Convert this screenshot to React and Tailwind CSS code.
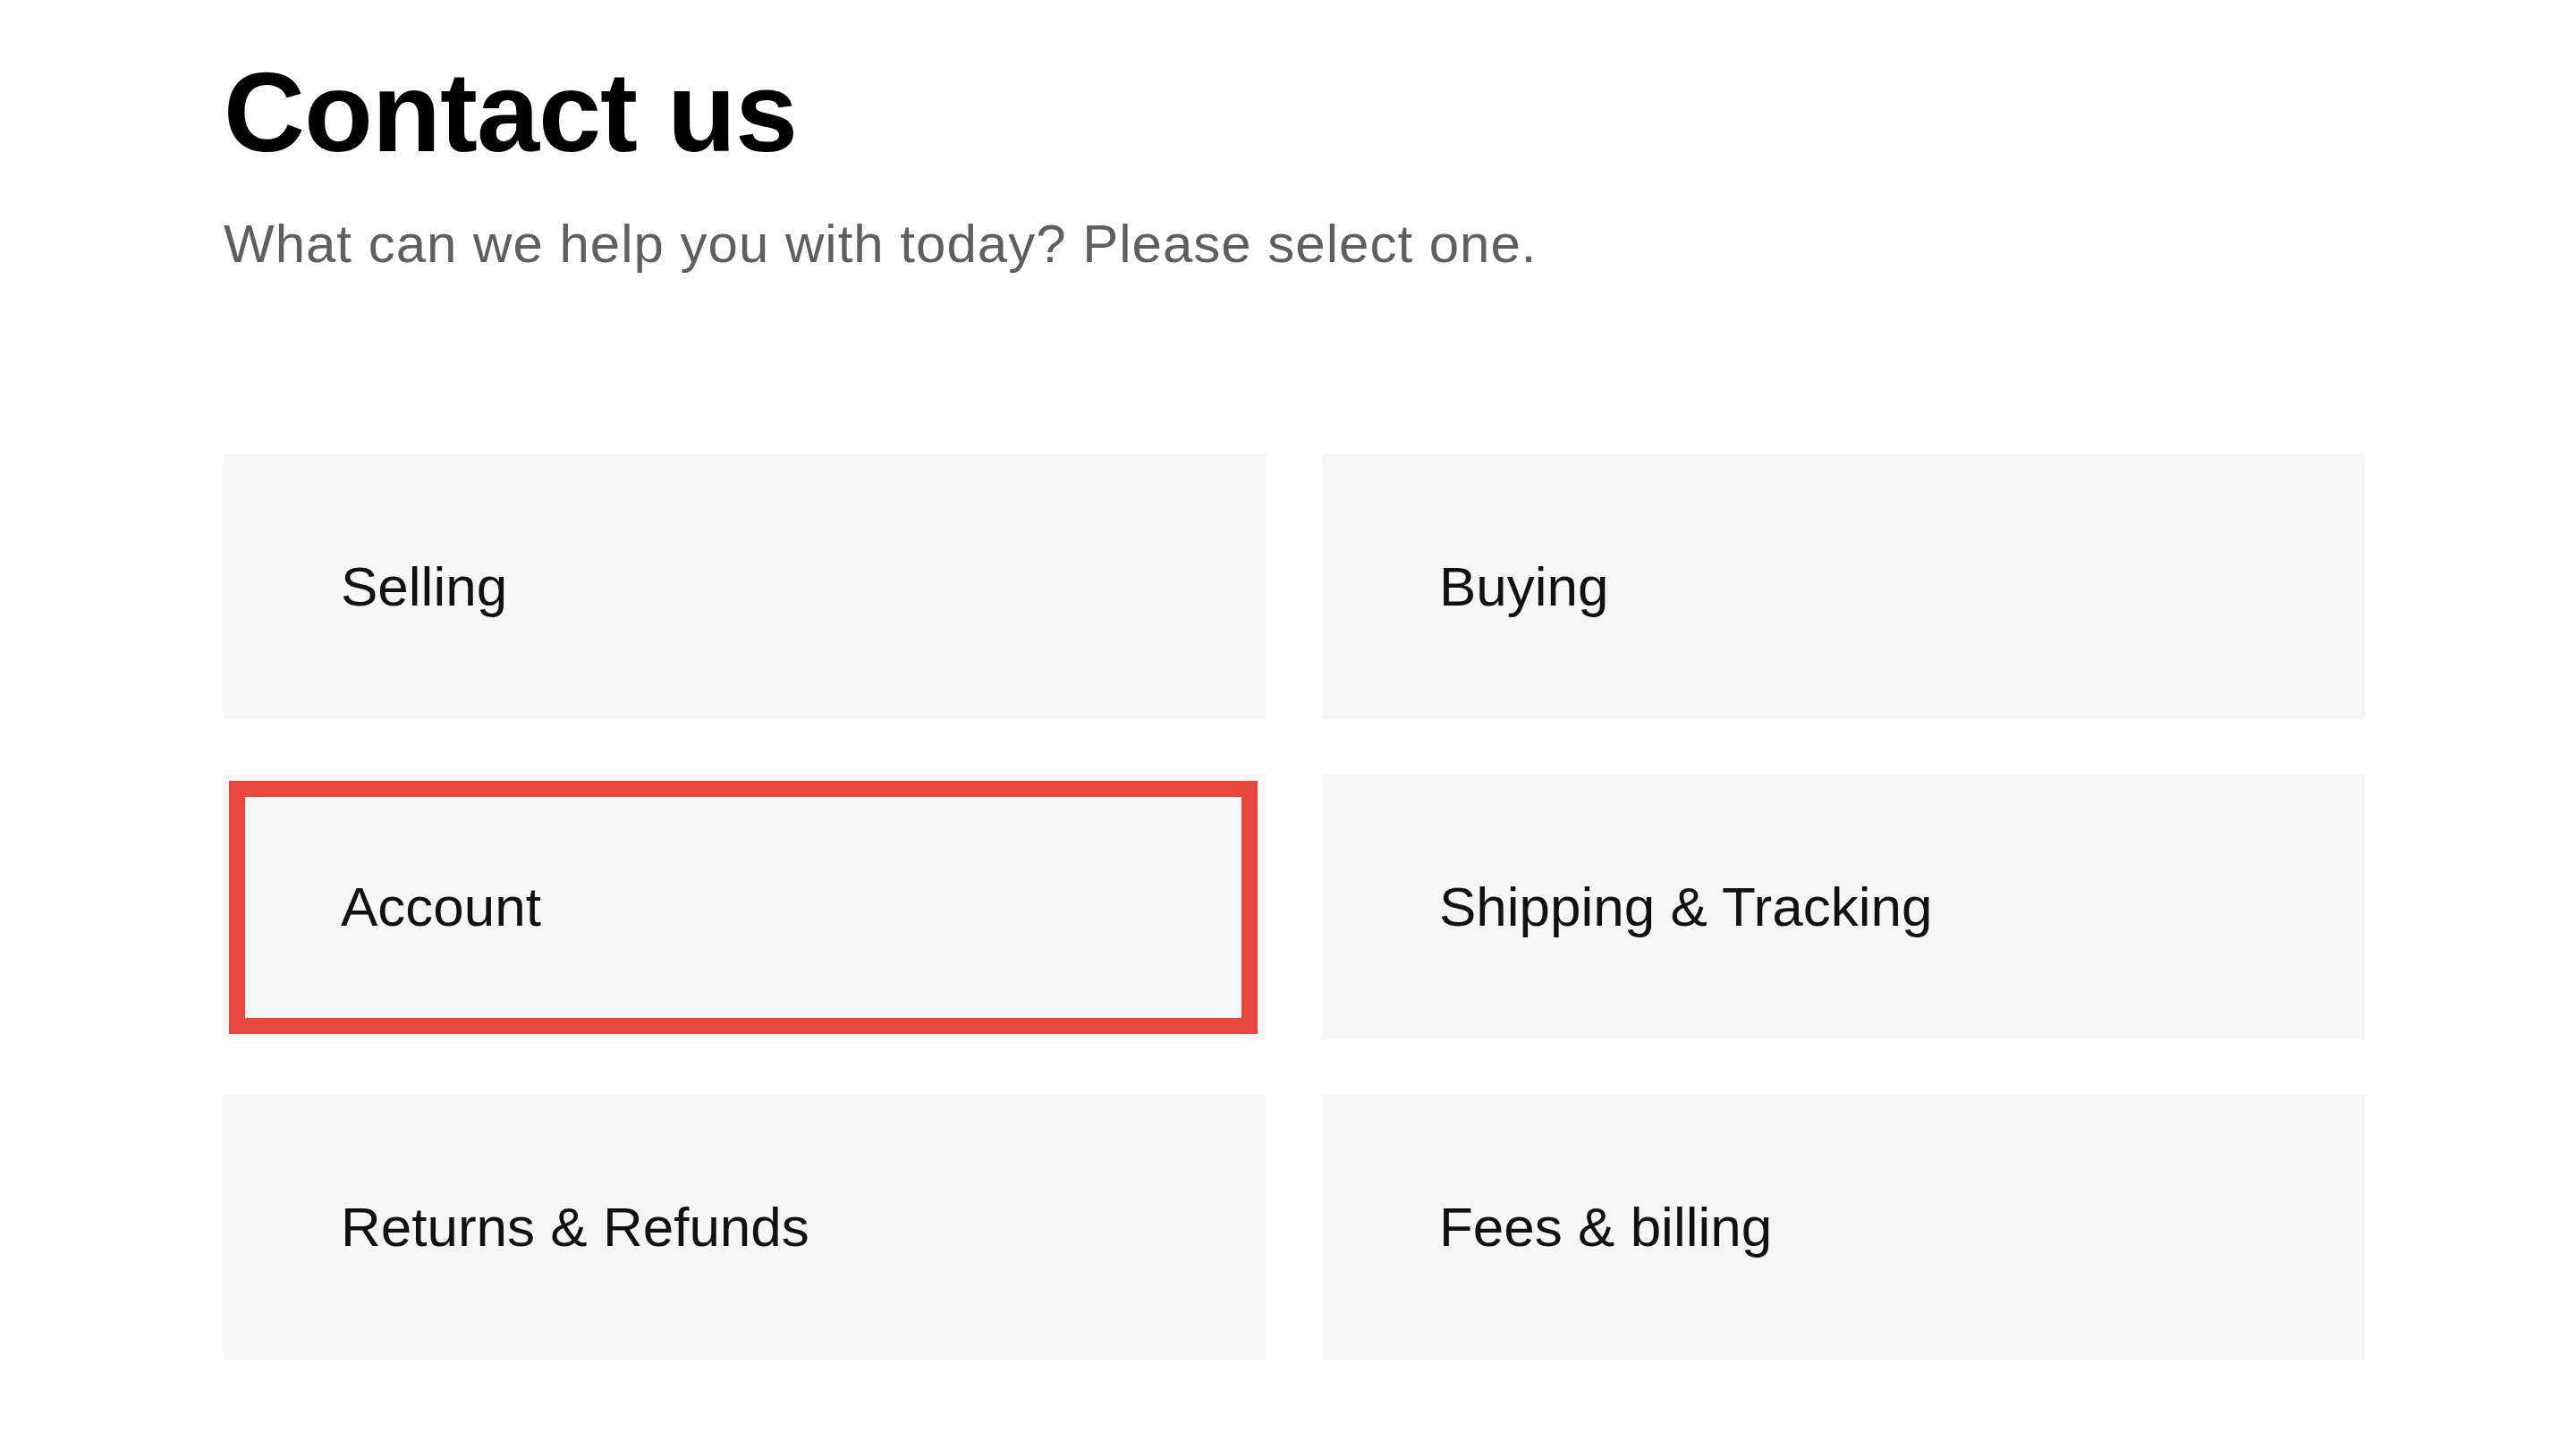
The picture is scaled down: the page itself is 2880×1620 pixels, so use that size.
import React from "react";

const topics = [
  { label: "Selling" },
  { label: "Buying" },
  { label: "Account", highlighted: true },
  { label: "Shipping & Tracking" },
  { label: "Returns & Refunds" },
  { label: "Fees & billing" },
];

const App = () => {
  return (
    <div className="min-h-screen w-full bg-white font-['Liberation_Sans',Arial,sans-serif]">
      <section className="pl-[250px] pt-[63px] pb-[100px]">
        {/* Header */}
        <h1 className="text-[126px] leading-none font-bold tracking-[-1px] text-black">
          Contact us
        </h1>
        <p className="mt-[54px] text-[60px] leading-none tracking-[1px] text-[#5f5f5f]">
          What can we help you with today? Please select one.
        </p>

        {/* Topic grid */}
        <div className="mt-[205px] grid w-[2394px] grid-cols-2 gap-[62px]">
          {topics.map((topic) => (
            <div
              key={topic.label}
              className="relative flex h-[296px] items-center bg-[#f6f6f6] pl-[131px] cursor-pointer"
            >
              <span className="text-[62px] leading-none text-[#111111]">
                {topic.label}
              </span>
              {topic.highlighted && (
                <div className="pointer-events-none absolute left-[6px] top-[7px] right-[10px] bottom-[6px] border-[18px] border-[#e8473f]"></div>
              )}
            </div>
          ))}
        </div>
      </section>
    </div>
  );
};

export default App;
